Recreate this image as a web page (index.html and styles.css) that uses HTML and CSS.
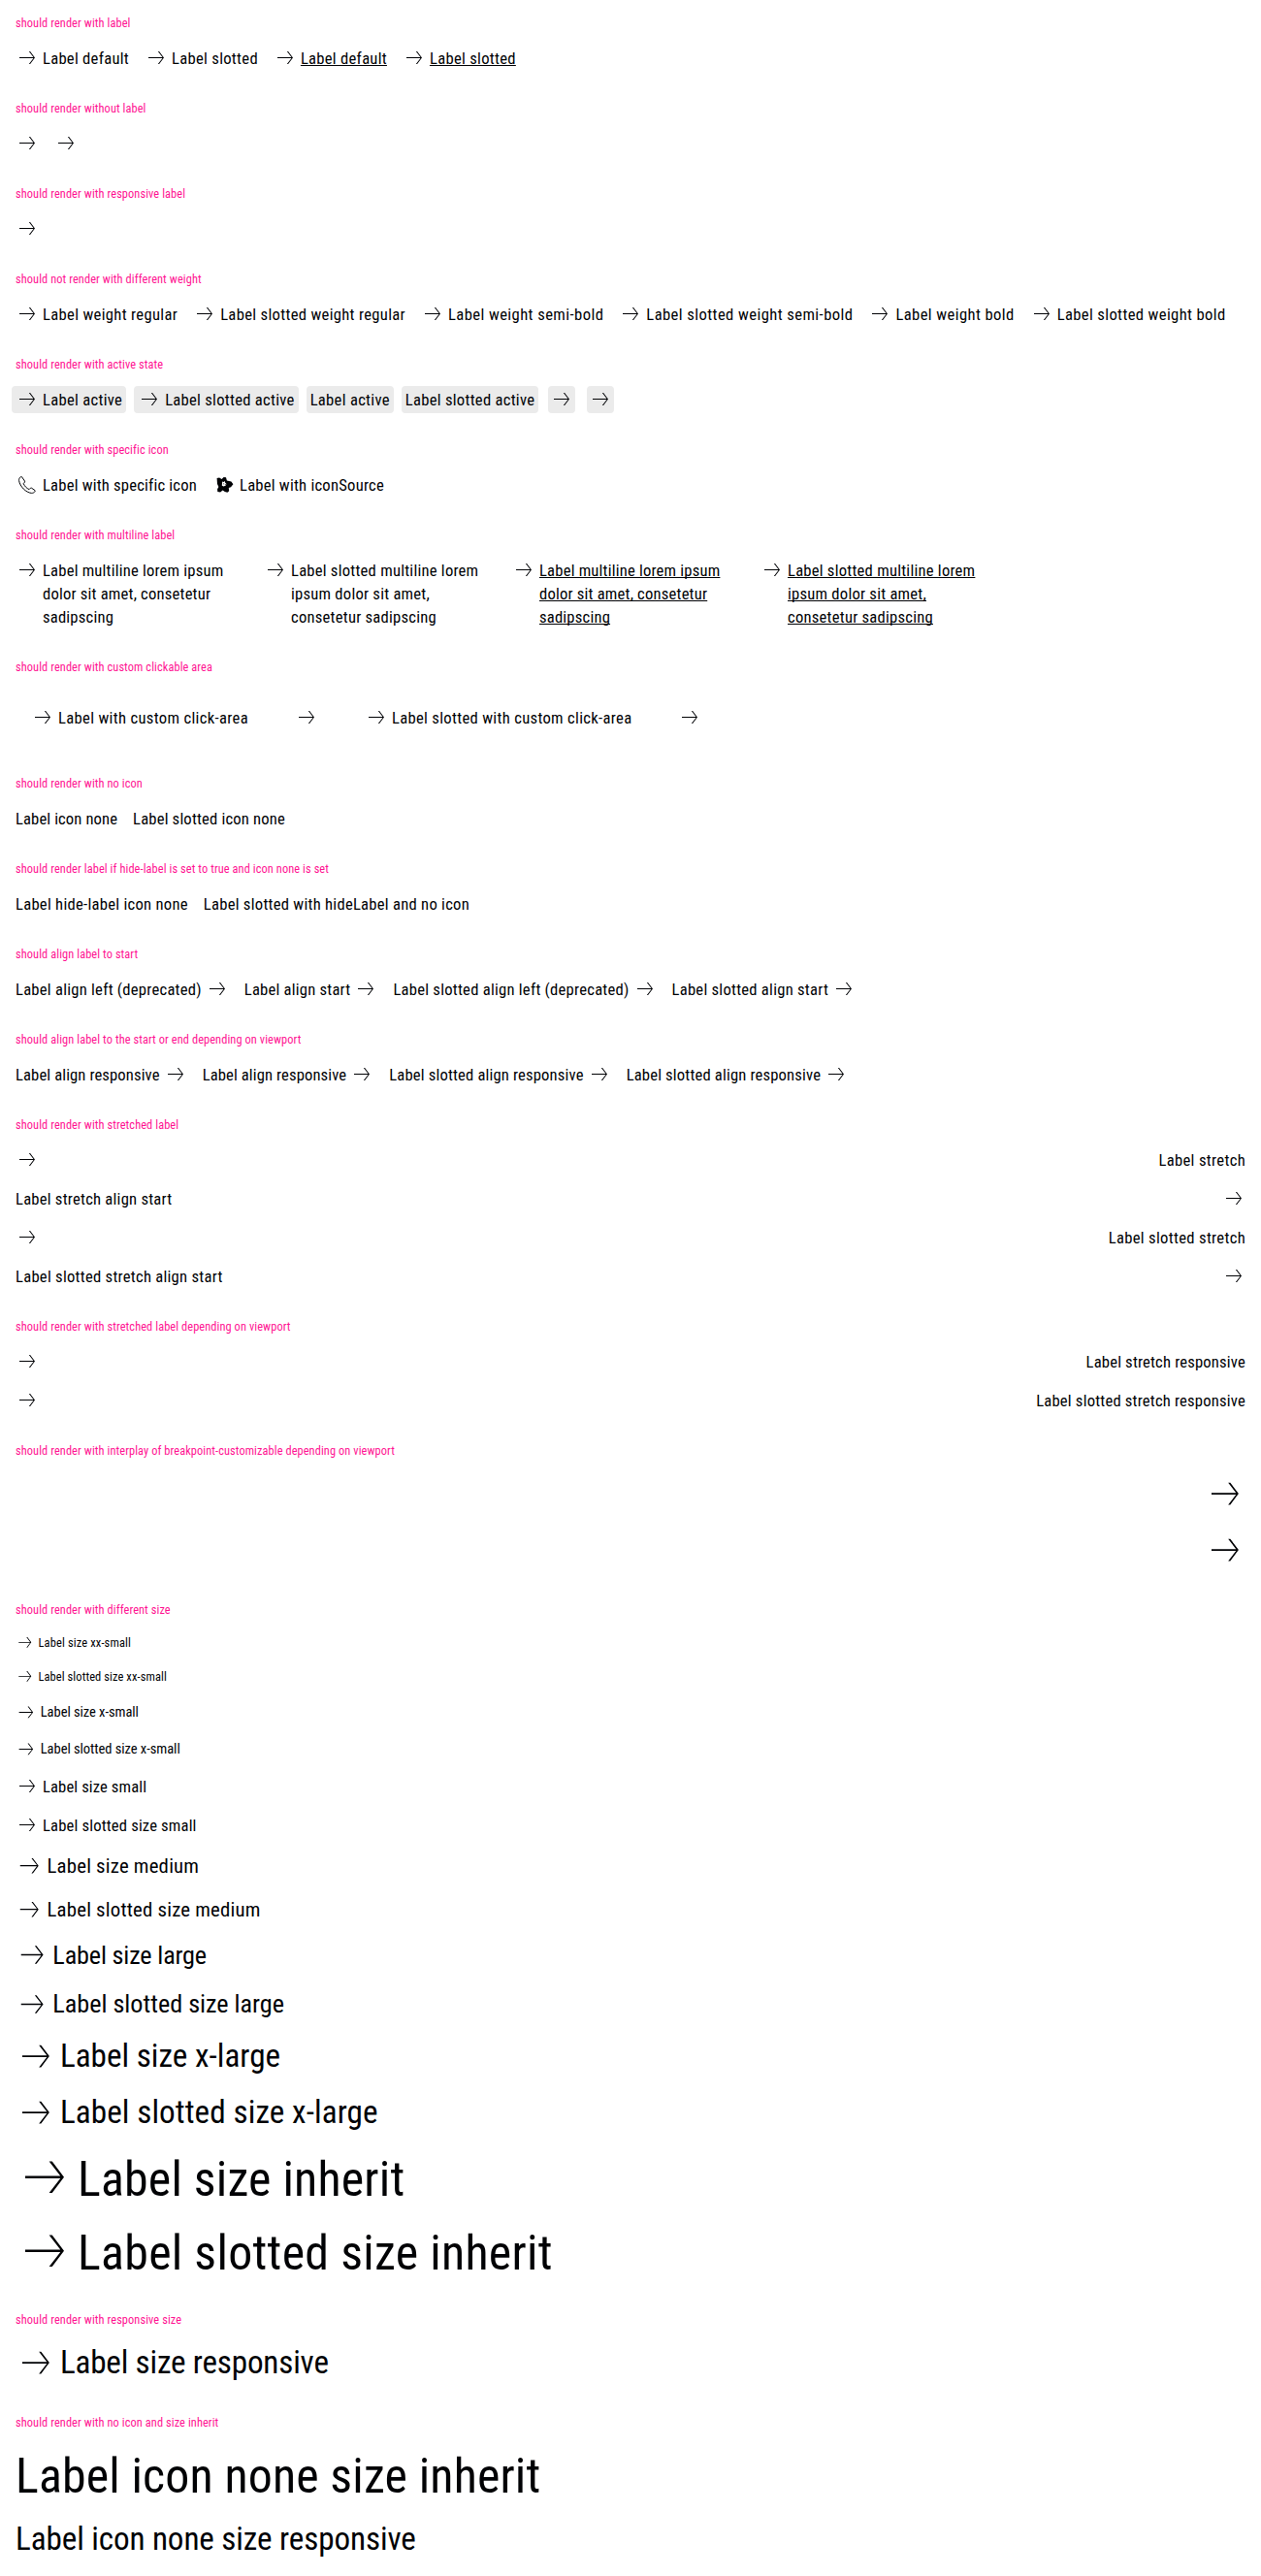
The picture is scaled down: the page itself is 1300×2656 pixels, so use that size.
FILE: index.html
```html
<!DOCTYPE html>
<html lang="en">
<head>
<meta charset="utf-8">
<title>Link Pure</title>
<link rel="stylesheet" href="styles.css">
</head>
<body>
<svg class="sprite" aria-hidden="true">
  <symbol id="arrow" viewBox="0 0 24 24"><path d="M4 11h14.5l-4.65-6h1.25L20 11.5 15.1 18h-1.25l4.65-6H4z"/></symbol>
  <symbol id="phone" viewBox="0 0 24 24"><path fill="none" stroke="currentColor" stroke-width="1" stroke-linejoin="round" d="M5.6 3.6c-1.500.9-2.200 2.200-2 4 .5 3 2.200 6 4.700 8.500s5.300 4 8.100 4.300c1.700.1 3-.6 3.800-2l-.2-.8-3.600-2.500-.9.1-1.400 1.400c-2.600-1.100-4.700-3.300-5.900-6l1.300-1.500.1-.9-3.100-4.500z"/></symbol>
  <symbol id="flower" viewBox="0 0 24 24"><path d="M4.600 5l2.500-.6L9.600 6l2-2 2.400.3.900 3.200 4.500 1.100 2 2.700-2.400 3-2.200.6.400 3.400-1.800 1.500-2.600-.9-2.200-1.300-2.500 2-2.800-.6-.2-2.800 1.300-2.300L5 11z"/><path fill="#fff" d="M10.200 8.600l1.400.5 1.200-1.100.4 1.700 1.300 1.300-1 1.700-2 .7-1.700-.7.100-1.800z"/><path d="M11.200 10.400h.9v.9h-.9zM12.900 11.300h.8v.8h-.8z"/></symbol>
</svg>
<main class="page">

<section class="case"><h2>should render with label</h2>
<div class="row">
  <a class="link"><svg class="icon"><use href="#arrow"/></svg><span class="t33">Label default</span></a>
  <a class="link"><svg class="icon"><use href="#arrow"/></svg><span class="t34">Label slotted</span></a>
  <a class="link underline"><svg class="icon"><use href="#arrow"/></svg><span class="t33">Label default</span></a>
  <a class="link underline"><svg class="icon"><use href="#arrow"/></svg><span class="t34">Label slotted</span></a>
</div></section>

<section class="case"><h2>should render without label</h2>
<div class="row">
  <a class="link"><svg class="icon"><use href="#arrow"/></svg></a>
  <a class="link"><svg class="icon"><use href="#arrow"/></svg></a>
</div></section>

<section class="case"><h2>should render with responsive label</h2>
<div class="row">
  <a class="link"><svg class="icon"><use href="#arrow"/></svg></a>
</div></section>

<section class="case"><h2>should not render with different weight</h2>
<div class="row">
  <a class="link"><svg class="icon"><use href="#arrow"/></svg><span class="t36">Label weight regular</span></a>
  <a class="link"><svg class="icon"><use href="#arrow"/></svg><span class="t35">Label slotted weight regular</span></a>
  <a class="link"><svg class="icon"><use href="#arrow"/></svg><span class="t42">Label weight semi-bold</span></a>
  <a class="link"><svg class="icon"><use href="#arrow"/></svg><span class="t42">Label slotted weight semi-bold</span></a>
  <a class="link"><svg class="icon"><use href="#arrow"/></svg><span class="t41">Label weight bold</span></a>
  <a class="link"><svg class="icon"><use href="#arrow"/></svg><span class="t38">Label slotted weight bold</span></a>
</div></section>

<section class="case"><h2>should render with active state</h2>
<div class="row">
  <a class="link active"><svg class="icon"><use href="#arrow"/></svg><span class="t34">Label active</span></a>
  <a class="link active"><svg class="icon"><use href="#arrow"/></svg><span class="t33">Label slotted active</span></a>
  <a class="link active"><span class="t34">Label active</span></a>
  <a class="link active"><span class="t33">Label slotted active</span></a>
  <a class="link active bare"><svg class="icon"><use href="#arrow"/></svg></a>
  <a class="link active bare"><svg class="icon"><use href="#arrow"/></svg></a>
</div></section>

<section class="case"><h2>should render with specific icon</h2>
<div class="row">
  <a class="link"><svg class="icon"><use href="#phone"/></svg><span class="t28">Label with specific icon</span></a>
  <a class="link"><svg class="icon"><use href="#flower"/></svg><span class="t30">Label with iconSource</span></a>
</div></section>

<section class="case"><h2>should render with multiline label</h2>
<div class="row multiline">
  <a class="link"><svg class="icon"><use href="#arrow"/></svg><span class="t28">Label multiline lorem ipsum dolor sit amet, consetetur sadipscing</span></a>
  <a class="link"><svg class="icon"><use href="#arrow"/></svg><span class="t30">Label slotted multiline lorem ipsum dolor sit amet, consetetur sadipscing</span></a>
  <a class="link underline"><svg class="icon"><use href="#arrow"/></svg><span class="t28">Label multiline lorem ipsum dolor sit amet, consetetur sadipscing</span></a>
  <a class="link underline"><svg class="icon"><use href="#arrow"/></svg><span class="t30">Label slotted multiline lorem ipsum dolor sit amet, consetetur sadipscing</span></a>
</div></section>

<section class="case"><h2>should render with custom clickable area</h2>
<div class="row">
  <a class="link padded"><svg class="icon"><use href="#arrow"/></svg><span class="t36">Label with custom click-area</span></a>
  <a class="link padded"><svg class="icon"><use href="#arrow"/></svg></a>
  <a class="link padded"><svg class="icon"><use href="#arrow"/></svg><span class="t35">Label slotted with custom click-area</span></a>
  <a class="link padded"><svg class="icon"><use href="#arrow"/></svg></a>
</div></section>

<section class="case"><h2>should render with no icon</h2>
<div class="row">
  <a class="link"><span class="t23">Label icon none</span></a>
  <a class="link"><span class="t27">Label slotted icon none</span></a>
</div></section>

<section class="case"><h2>should render label if hide-label is set to true and icon none is set</h2>
<div class="row">
  <a class="link"><span class="t33">Label hide-label icon none</span></a>
  <a class="link"><span class="t32">Label slotted with hideLabel and no icon</span></a>
</div></section>

<section class="case"><h2>should align label to start</h2>
<div class="row">
  <a class="link"><span class="t31">Label align left (deprecated)</span><svg class="icon"><use href="#arrow"/></svg></a>
  <a class="link"><span class="t29">Label align start</span><svg class="icon"><use href="#arrow"/></svg></a>
  <a class="link"><span class="t31">Label slotted align left (deprecated)</span><svg class="icon"><use href="#arrow"/></svg></a>
  <a class="link"><span class="t31">Label slotted align start</span><svg class="icon"><use href="#arrow"/></svg></a>
</div></section>

<section class="case"><h2>should align label to the start or end depending on viewport</h2>
<div class="row">
  <a class="link"><span class="t23">Label align responsive</span><svg class="icon"><use href="#arrow"/></svg></a>
  <a class="link"><span class="t23">Label align responsive</span><svg class="icon"><use href="#arrow"/></svg></a>
  <a class="link"><span class="t26">Label slotted align responsive</span><svg class="icon"><use href="#arrow"/></svg></a>
  <a class="link"><span class="t26">Label slotted align responsive</span><svg class="icon"><use href="#arrow"/></svg></a>
</div></section>

<section class="case"><h2>should render with stretched label</h2>
<div class="stack stretch">
  <a class="link"><svg class="icon"><use href="#arrow"/></svg><span class="t36">Label stretch</span></a>
  <a class="link"><span class="t30">Label stretch align start</span><svg class="icon"><use href="#arrow"/></svg></a>
  <a class="link"><svg class="icon"><use href="#arrow"/></svg><span class="t35">Label slotted stretch</span></a>
  <a class="link"><span class="t32">Label slotted stretch align start</span><svg class="icon"><use href="#arrow"/></svg></a>
</div></section>

<section class="case"><h2>should render with stretched label depending on viewport</h2>
<div class="stack stretch">
  <a class="link"><svg class="icon"><use href="#arrow"/></svg><span class="t27">Label stretch responsive</span></a>
  <a class="link"><svg class="icon"><use href="#arrow"/></svg><span class="t28">Label slotted stretch responsive</span></a>
</div></section>

<section class="case"><h2>should render with interplay of breakpoint-customizable depending on viewport</h2>
<div class="stack end">
  <a class="link x-large"><svg class="icon"><use href="#arrow"/></svg></a>
  <a class="link x-large"><svg class="icon"><use href="#arrow"/></svg></a>
</div></section>

<section class="case"><h2>should render with different size</h2>
<div class="stack">
  <a class="link xx-small"><svg class="icon"><use href="#arrow"/></svg><span class="t27">Label size xx-small</span></a>
  <a class="link xx-small"><svg class="icon"><use href="#arrow"/></svg><span class="t23">Label slotted size xx-small</span></a>
  <a class="link x-small"><svg class="icon"><use href="#arrow"/></svg><span class="t12">Label size x-small</span></a>
  <a class="link x-small"><svg class="icon"><use href="#arrow"/></svg><span class="t12">Label slotted size x-small</span></a>
  <a class="link"><svg class="icon"><use href="#arrow"/></svg><span class="t23">Label size small</span></a>
  <a class="link"><svg class="icon"><use href="#arrow"/></svg><span class="t26">Label slotted size small</span></a>
  <a class="link medium"><svg class="icon"><use href="#arrow"/></svg><span class="t26">Label size medium</span></a>
  <a class="link medium"><svg class="icon"><use href="#arrow"/></svg><span class="t26">Label slotted size medium</span></a>
  <a class="link large"><svg class="icon"><use href="#arrow"/></svg><span class="t9">Label size large</span></a>
  <a class="link large"><svg class="icon"><use href="#arrow"/></svg><span class="t14">Label slotted size large</span></a>
  <a class="link x-large"><svg class="icon"><use href="#arrow"/></svg><span class="t16">Label size x-large</span></a>
  <a class="link x-large"><svg class="icon"><use href="#arrow"/></svg><span class="t18">Label slotted size x-large</span></a>
  <a class="link inherit"><svg class="icon"><use href="#arrow"/></svg><span class="t19">Label size inherit</span></a>
  <a class="link inherit"><svg class="icon"><use href="#arrow"/></svg><span class="t20">Label slotted size inherit</span></a>
</div></section>

<section class="case"><h2>should render with responsive size</h2>
<div class="stack">
  <a class="link x-large"><svg class="icon"><use href="#arrow"/></svg><span class="t10">Label size responsive</span></a>
</div></section>

<section class="case"><h2>should render with no icon and size inherit</h2>
<div class="stack">
  <a class="link inherit"><span class="t18">Label icon none size inherit</span></a>
  <a class="link x-large"><span class="t12">Label icon none size responsive</span></a>
</div></section>

</main>
</body>
</html>
```
FILE: styles.css
```css
* { box-sizing: border-box; }

body {
  margin: 0;
  background: #fff;
  color: #010205;
  font-family: Roboto, "Liberation Sans", sans-serif;
  font-stretch: condensed;
}

.sprite { display: none; }

.page {
  display: flex;
  flex-direction: column;
  gap: 32px;
  padding: 16px;
}

h2 {
  margin: 0 0 16px;
  color: #ff1493;
  font-size: 12.4px;
  font-weight: 400;
  line-height: 16px;
  letter-spacing: .006em;
}

.row { display: flex; gap: 16px; }

.stack {
  display: flex;
  flex-direction: column;
  align-items: flex-start;
  gap: 16px;
}

/* line height and icon size both follow the font size */
.link {
  --line: calc(6px + 1.125em);
  --drop: 1px;
  --tighten: .0165em;
  display: flex;
  flex: none;
  gap: 4px;
  font-size: 16px;
  line-height: var(--line);
}

.link span {
  margin: var(--drop) 0 calc(-1 * var(--drop));
  font-size: 1.04em;
  letter-spacing: calc(var(--track, 0em) - var(--tighten));
}

.icon {
  flex: none;
  width: var(--line);
  height: var(--line);
  fill: currentColor;
}

.underline span {
  text-decoration: underline 1px;
  text-decoration-skip-ink: none;
  text-underline-offset: 1px;
}

.active {
  background: #ebebeb;
  border-radius: 4px;
  padding: 2px 4px;
  margin: -2px -4px;
}

.bare { padding: 2px; margin: -2px; }

.multiline .link { width: 240px; }

.padded { padding: 16px; }

.stretch { align-items: stretch; }

.stretch .link { justify-content: space-between; }

.end { align-items: flex-end; }

.xx-small { --drop: 0px; font-size: 12px; }
.x-small { --drop: 0px; font-size: 14px; }
.medium { --drop: 0px; font-size: 20px; }
.large { --drop: -.5px; --tighten: .0152em; font-size: 25.2px; }
.x-large { --drop: -.5px; --tighten: .0155em; font-size: 31.9px; }
.inherit { --drop: 1px; --tighten: .0152em; font-size: 48px; }

/* tracking steps, in thousandths of an em */
.t9 { --track: .009em; }
.t10 { --track: .010em; }
.t12 { --track: .0125em; }
.t14 { --track: .0145em; }
.t16 { --track: .016em; }
.t18 { --track: .0182em; }
.t19 { --track: .0193em; }
.t20 { --track: .0212em; }
.t23 { --track: .023em; }
.t26 { --track: .026em; }
.t27 { --track: .027em; }
.t28 { --track: .028em; }
.t29 { --track: .029em; }
.t30 { --track: .0303em; }
.t31 { --track: .031em; }
.t32 { --track: .032em; }
.t33 { --track: .0326em; }
.t34 { --track: .034em; }
.t35 { --track: .0352em; }
.t36 { --track: .036em; }
.t38 { --track: .038em; }
.t41 { --track: .0405em; }
.t42 { --track: .0412em; }
```
